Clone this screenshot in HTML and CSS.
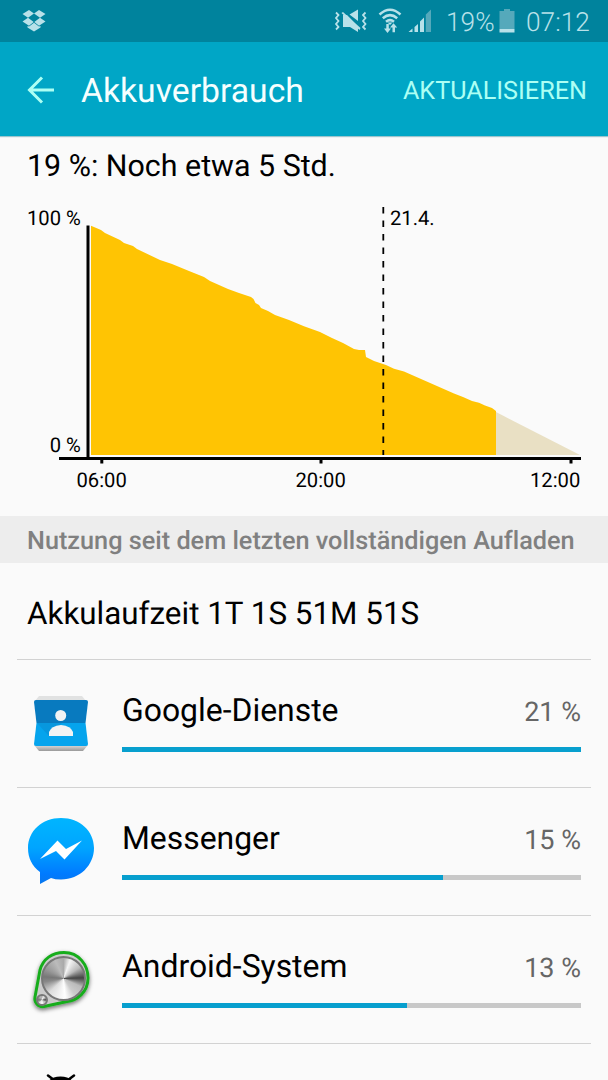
FILE: index.html
```html
<!DOCTYPE html>
<html lang="de">
<head>
<meta charset="utf-8">
<title>Akkuverbrauch</title>
<link rel="stylesheet" href="styles.css">
</head>
<body>
<div class="screen">
  <header class="status">
    <svg class="dropbox" width="24" height="24" viewBox="0 0 24 24"><path d="M7 1 12 4.500 6 8.800 .5 5ZM17 1 23.500 5 18 8.800 12 4.500ZM6 8.800 11.700 13 7 16.800 .5 12.500ZM18 8.800 23.500 12.500 17 16.800 12.300 13ZM12 13.800 17 17.600 18.500 17 18.500 18.500 12 22.500 5.500 18.500 5.500 17 7 17.600Z"/></svg>
    <div class="tray">
      <svg class="signals" width="100" height="30" viewBox="330 6 100 30">
        <path d="M357 9.500V21L348.500 14.500ZM342 15H346L357 26V32L349 27H342ZM340.500 13 342 12 359.500 28 358.500 30Z"/>
        <path class="wave" d="M335 12.500 337.500 15 335 18 337.500 21 335 24 337.500 27 335 29.500M364.500 12.500 362 15 364.500 18 362 21 364.500 24 362 27 364.500 29.500"/>
        <path class="wifi" d="M378.500 14.500Q389 5 399.500 14.500M381.800 18.200Q389 12 396.200 18.200M385 21.700Q389 18.500 393 21.700"/>
        <path d="M386.500 22.500H391.500L389 25ZM385.300 24H387.800V28.500H390L386.500 33 383 28.500H385.300ZM391.500 32.300V27.500H389L392.500 23.300 396.200 27.500H394V32.300Z"/>
        <path d="M407.500 32 411.500 28.500V32ZM413.500 27 417 24V32H413.500ZM419 21.500 423 17.500V32H419Z"/><path class="dim" d="M424.800 14.500 430 9.500V32H424.800Z"/>
      </svg>
      <span class="pct">19%</span>
      <svg class="cell" width="16" height="24" viewBox="0 0 16 24"><path class="dim" d="M5 0H11V2H15.500V20H.5V2H5Z"/><path d="M.5 20H15.500V23.500H.5Z"/></svg>
      <span class="clock">07:12</span>
    </div>
  </header>
  <nav class="appbar">
    <svg class="back" width="28" height="28" viewBox="0 0 28 28"><path d="M27 14H2M15 1.500 2.500 14 15 26.500"/></svg>
    <h1 class="title">Akkuverbrauch</h1>
    <span class="refresh">AKTUALISIEREN</span>
  </nav>
  <section class="battery">
    <p class="estimate">19 %: Noch etwa 5 Std.</p>
    <svg class="chart" width="608" height="310" viewBox="0 196 608 310">
      <path class="used" d="M91 225.800 101 230 105 233 120 240 124 243 133 246 137 249 160 260 172 264 189 271 204 277 210 281 228 289 239 293 251 297 253.500 299 255.500 303 259 305 261 308 268 311 275 315 289 320 304 326.300 320 332 332 338 343 343 354 349 359 350H365L366 357 374 361 386 365 394 368.800 404 371.500 454 393.500 463 397 472 401 479 402.700 485 405.500 492 408 496 411V455H91Z"/>
      <path class="forecast" d="M496 412 580 455H496Z"/>
      <path class="axis" d="M88 225.500V459"/>
      <path class="axis" d="M59 458.500H581"/>
      <path class="axis" d="M101.800 459V463.500M321 459V463.500M571 459V463.500"/>
      <path class="midnight" d="M383.300 207V455"/>
      <text class="label" x="27" y="225.200">100 %</text>
      <text class="label" x="49.700" y="452">0 %</text>
      <text class="label" x="390" y="225.200">21.4.</text>
      <text class="label" x="76.500" y="487.200">06:00</text>
      <text class="label" x="295.500" y="487.200">20:00</text>
      <text class="label" x="530" y="487.200">12:00</text>
    </svg>
  </section>
  <h2 class="band"><span>Nutzung seit dem letzten vollständigen Aufladen</span></h2>
  <main class="list">
    <div class="runtime"><span>Akkulaufzeit 1T 1S 51M 51S</span></div>
    <article class="row">
      <svg class="icon" width="88" height="90" viewBox="17 680 88 90">
        <defs><linearGradient id="fold" x2="0" y2="1"><stop stop-color="#ddd"/><stop offset="1" stop-color="#999"/></linearGradient></defs>
        <path fill="#e1e2e2" d="M39 696H82L86 701H35Z"/><path fill="url(#fold)" d="M34 745H88L83 751H39Z"/>
        <path fill="#087abf" d="M36 700H86Q88 700 88 702L85.500 723H36.500L34 702Q34 700 36 700Z"/>
        <path fill="#05a4ed" d="M36.500 723H85.500L88 744Q88 746 86 746H36Q34 746 34 744Z"/>
        <path fill="#0797de" d="M37 723H62L49 736Z"/>
        <circle cx="60.700" cy="715.500" r="5.500" fill="#f2f3f4"/><path fill="#f2f3f4" d="M49 736V732Q51 726 61 725Q71 726 73 732V736Z"/>
      </svg>
      <div class="detail"><div class="line"><span>Google-Dienste</span><span class="share">21 %</span></div><div class="track"><div class="fill" style="width:100%"></div></div></div>
    </article>
    <article class="row">
      <svg class="icon" width="88" height="90" viewBox="17 808 88 90">
        <defs><linearGradient id="bubble" x2="0" y2="1"><stop stop-color="#00b5ff"/><stop offset=".45" stop-color="#00a5ff"/><stop offset=".85" stop-color="#007aff"/><stop offset="1" stop-color="#0877ed"/></linearGradient></defs>
        <path fill="url(#bubble)" d="M61 818C42 818 28 831 28 848C28 858 32 866 40 872V884L51 878Q55 879.500 61 879.500C80 879.500 94 865 94 848C94 831 80 818 61 818Z"/>
        <path fill="#fff" d="M40 859 57.500 840.500 66 849 82 840.500 64.500 859.500 56 851Z"/>
      </svg>
      <div class="detail"><div class="line"><span>Messenger</span><span class="share">15 %</span></div><div class="track"><div class="fill" style="width:70%"></div></div></div>
    </article>
    <article class="row">
      <svg class="icon" width="88" height="90" viewBox="17 936 88 90">
        <defs><filter id="shade" x="-20%" y="-20%" width="140%" height="150%"><feDropShadow dx="0" dy="2" stdDeviation="2" flood-opacity=".55"/></filter></defs>
        <path filter="url(#shade)" fill="#ccc" stroke="#19ad1c" stroke-width="3" d="M40 970C43 959 52 952.500 64 952.500C79 952.500 88 965 88 978C88 992 77 1000.500 67 1001.500L44 1006.500C38 1007.500 34 1002 35 997Z"/>
        <foreignObject x="40.500" y="955.500" width="45" height="45"><div class="knob big"></div></foreignObject>
        <foreignObject x="35.500" y="994" width="12" height="12"><div class="knob small"></div></foreignObject>
      </svg>
      <div class="detail"><div class="line"><span>Android-System</span><span class="share">13 %</span></div><div class="track"><div class="fill" style="width:62%"></div></div></div>
    </article>
    <article class="row last">
      <svg class="droid" width="88" height="37" viewBox="17 1044 88 37"><path d="M48 1075.500 54 1080M74 1075.500 68 1080" stroke="#000" stroke-width="2.500" stroke-linecap="round"/><path d="M47 1086Q48 1076.500 60.500 1076.500T74 1086Z"/></svg>
    </article>
  </main>
</div>
</body>
</html>
```
FILE: styles.css
```css
* { box-sizing: border-box; }
body { margin: 0; background: #fafafa; color: #000; font-family: Roboto, sans-serif; text-rendering: geometricPrecision; font-variant-ligatures: none; }
.screen { width: 608px; height: 1080px; overflow: hidden; display: flex; flex-direction: column; }
svg { display: block; flex: none; }
h1, h2, p { margin: 0; font-weight: 400; }
.status { height: 42px; flex: none; background: #00839d; color: #b8e1e9; padding: 0 17px 0 22px; display: flex; justify-content: space-between; align-items: center; }
.status svg { fill: #b8e1e9; }
.status .dim { fill: #55a9bb; }
.status .wave { fill: none; stroke: #b8e1e9; stroke-width: 1.8; }
.status .wifi { fill: none; stroke: #b8e1e9; stroke-width: 2.5; }
.tray { display: flex; align-items: center; font-size: 26.300px; font-weight: 300; line-height: 42px; white-space: nowrap; }
.signals { margin-right: 15px; }
.pct { width: 53px; padding-top: 3px; }
.cell { margin-right: 11px; }
.clock { width: 65px; padding-top: 3px; }
.appbar { height: 94px; flex: none; background: #00a6c6; padding: 4px 21px 0 27px; display: flex; align-items: center; box-shadow: 0 1px 1px #9cc5cd; }
.back { fill: none; stroke: #acfff4; stroke-width: 3; margin-top: -2px; }
.title { font-size: 33.700px; color: #f5ffff; margin-left: 26px; margin-top: 1px; }
.refresh { margin-left: auto; font-size: 25.200px; color: #acfff4; margin-top: 1px; }
.battery { height: 380px; flex: none; padding-top: 10px; }
.estimate { font-size: 30.400px; line-height: 42px; height: 50px; padding-left: 27px; }
.used { fill: #ffc403; }
.forecast { fill: #e9e0c4; }
.axis { stroke: #000; stroke-width: 3; fill: none; }
.midnight { stroke: #000; stroke-width: 1.8; stroke-dasharray: 6.600 6.900; }
.label { font-size: 20.200px; }
.band { height: 47px; flex: none; background: #ededed; color: #808080; font-size: 25.250px; font-weight: 500; line-height: 51px; padding-left: 27px; white-space: nowrap; }
.list { padding: 0 17px; }
.runtime { height: 95.500px; font-size: 31.400px; line-height: 102px; padding-left: 10px; }
.row { height: 128.300px; border-top: 1px solid #d2d2d2; display: flex; padding-right: 10px; }
.icon { margin-top: 20px; }
.detail { flex: 1; margin-left: 17px; padding-top: 30px; }
.line { display: flex; justify-content: space-between; align-items: baseline; font-size: 31.900px; line-height: 40px; height: 57px; }
.share { font-size: 27px; color: #666; }
.track { height: 5px; background: #c8c8c8; }
.fill { height: 5px; background: #079fce; }
.knob { border-radius: 50%; border: 2px solid #777; background: conic-gradient(#aaa, #f5f5f5 20deg, #bbb 55deg, #444 88deg, #bbb 115deg, #ccc 145deg, #fff 175deg, #ddd 225deg, #888 260deg, #777 275deg, #999 300deg, #bbb 335deg, #aaa); }
.big { width: 45px; height: 45px; }
.small { width: 12px; height: 12px; }
```
